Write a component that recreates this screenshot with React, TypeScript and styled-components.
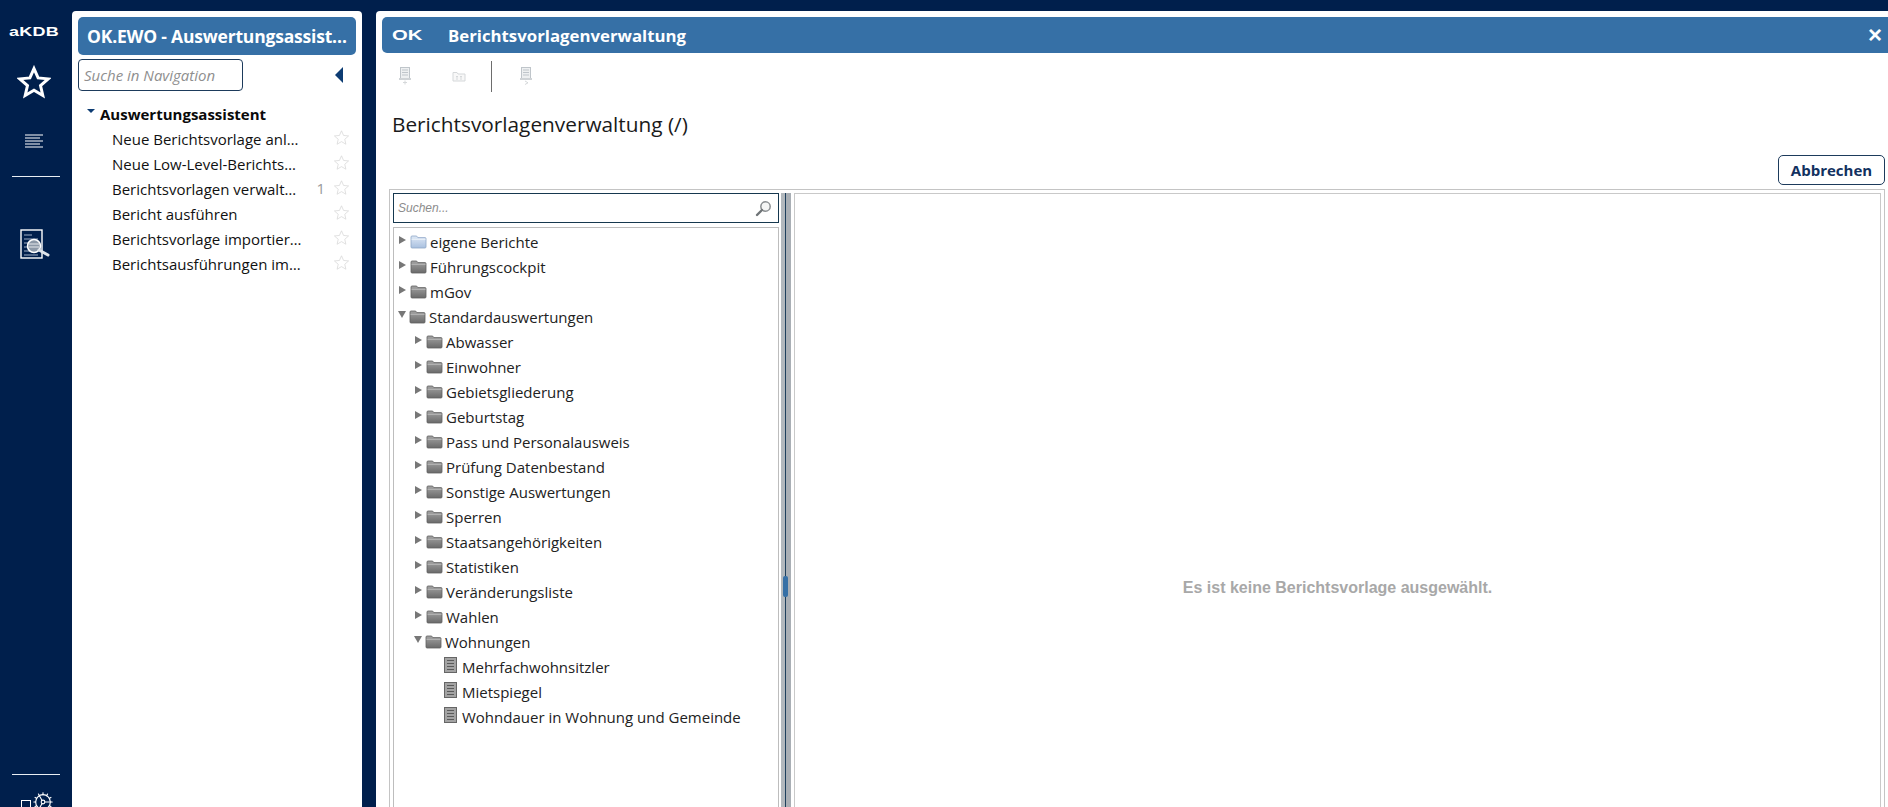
import React from "react";
import styled, { createGlobalStyle } from "styled-components";
import { Cog } from "lucide-react";

const NAVY = "#001f4c";
const BLUE = "#3670a6";
const UI_FONT = `"Open Sans", "Noto Sans", sans-serif`;

const navItems = [
  { label: "Neue Berichtsvorlage anl…" },
  { label: "Neue Low-Level-Berichts…" },
  { label: "Berichtsvorlagen verwalt…", count: 1 },
  { label: "Bericht ausführen" },
  { label: "Berichtsvorlage importier…" },
  { label: "Berichtsausführungen im…" },
];

type TreeEntry = {
  label: string;
  level: number;
  kind: "folder" | "own" | "file";
  open?: boolean;
};

const treeItems: TreeEntry[] = [
  { label: "eigene Berichte", level: 0, kind: "own" },
  { label: "Führungscockpit", level: 0, kind: "folder" },
  { label: "mGov", level: 0, kind: "folder" },
  { label: "Standardauswertungen", level: 0, kind: "folder", open: true },
  { label: "Abwasser", level: 1, kind: "folder" },
  { label: "Einwohner", level: 1, kind: "folder" },
  { label: "Gebietsgliederung", level: 1, kind: "folder" },
  { label: "Geburtstag", level: 1, kind: "folder" },
  { label: "Pass und Personalausweis", level: 1, kind: "folder" },
  { label: "Prüfung Datenbestand", level: 1, kind: "folder" },
  { label: "Sonstige Auswertungen", level: 1, kind: "folder" },
  { label: "Sperren", level: 1, kind: "folder" },
  { label: "Staatsangehörigkeiten", level: 1, kind: "folder" },
  { label: "Statistiken", level: 1, kind: "folder" },
  { label: "Veränderungsliste", level: 1, kind: "folder" },
  { label: "Wahlen", level: 1, kind: "folder" },
  { label: "Wohnungen", level: 1, kind: "folder", open: true },
  { label: "Mehrfachwohnsitzler", level: 2, kind: "file" },
  { label: "Mietspiegel", level: 2, kind: "file" },
  { label: "Wohndauer in Wohnung und Gemeinde", level: 2, kind: "file" },
];

const StarOutline = ({ size, color, width }: { size: number; color: string; width: number }) => (
  <svg width={size} height={size} viewBox="0 0 24 24" fill="none" stroke={color} strokeWidth={width} strokeLinejoin="miter">
    <path d="M12 2.5l2.9 6.6 7.1.7-5.4 4.7 1.6 7-6.2-3.7-6.2 3.7 1.6-7L2 9.8l7.1-.7z" />
  </svg>
);

const ListIcon = () => (
  <svg width="18" height="15" viewBox="0 0 18 15" stroke="#fff" strokeWidth="1.1">
    <path d="M0 1h18M0 4h15M0 7h18M0 10h15M0 13h18" />
  </svg>
);

const ReportIcon = () => (
  <svg width="32" height="32" viewBox="0 0 32 32" fill="none">
    <rect x="1" y="1" width="21" height="28" fill="#001f4c" stroke="#fff" strokeWidth="1.4" />
    <path d="M4 6h8M4 10h14M4 14h5M4 18h4M4 22h6M4 26h14" stroke="#9fb0c6" strokeWidth="1.2" />
    <circle cx="14" cy="17" r="6.5" fill="#8d99a8" stroke="#fff" strokeWidth="1.5" />
    <path d="M9 15h10M9 18h10" stroke="#e5e8ec" strokeWidth="1" />
    <path d="M19 21l9 5" stroke="#dfe4ea" strokeWidth="3" strokeLinecap="round" />
  </svg>
);

const ToolDoc = ({ tail }: { tail: "plus" | "arrow" }) => (
  <svg width="14" height="18" viewBox="0 0 14 18" fill="none" stroke="#bfc5ca" strokeWidth="1">
    <rect x="2.5" y="0.5" width="9" height="11" fill="#eef0f1" />
    <path d="M4 3h6M4 5.5h6M4 8h6" />
    <rect x="1" y="11" width="12" height="2" fill="#cfd3d6" stroke="none" />
    {tail === "plus" ? <path d="M7 13.5v4M5 15.5h4" stroke="#d5d8da" /> : <path d="M6 14l3 1.8L6 17.5" stroke="#d5d8da" />}
  </svg>
);

const ToolFolder = () => (
  <svg width="14" height="12" viewBox="0 0 14 12" fill="none" stroke="#d5d8da" strokeWidth="1">
    <path d="M1 2.5h4l1 1.5h7v7H1z" fill="#f8f8f8" />
    <path d="M4 6.5h2M5 6.5V10M8 6.5h2M9 6.5V10" />
  </svg>
);

const SearchGlass = () => (
  <svg width="17" height="17" viewBox="0 0 17 17" fill="none">
    <circle cx="10.5" cy="6.5" r="4.7" stroke="#8b8f92" strokeWidth="1.5" fill="#f4f5f5" />
    <path d="M7 10l-5 5" stroke="#6f7477" strokeWidth="2.4" strokeLinecap="round" />
  </svg>
);

const FolderIcon = ({ own }: { own: boolean }) => {
  const id = own ? "folderOwn" : "folderGrey";
  return (
    <svg width="17" height="14" viewBox="0 0 17 14">
      <defs>
        <linearGradient id={id} x1="0" y1="0" x2="0" y2="1">
          <stop offset="0" stopColor={own ? "#dfe9f6" : "#a3a3a3"} />
          <stop offset="1" stopColor={own ? "#a9c0df" : "#6a6a6a"} />
        </linearGradient>
      </defs>
      <path
        d="M1 3V2q0-1 1-1h4q1 0 1.5 1l.3.6H15q1 0 1 1V12q0 1-1 1H2q-1 0-1-1z"
        fill={`url(#${id})`}
        stroke={own ? "#8ea6c6" : "#5f5f5f"}
        strokeWidth="0.8"
      />
      <path d="M1.5 4.3h14" stroke={own ? "#f3f7fc" : "#c4c4c4"} strokeWidth="0.8" />
    </svg>
  );
};

const FileIcon = () => (
  <svg width="13" height="16" viewBox="0 0 13 16">
    <rect x="0.5" y="0.5" width="12" height="15" fill="#a3a3a3" stroke="#666" />
    <path d="M3 3.5h7M3 6.5h7M3 9.5h7M3 12.5h7" stroke="#5a5a5a" strokeWidth="1" />
  </svg>
);

const App = () => {
  return (
    <Page>
      <GlobalStyle />
      <SideRail>
        <BrandLogo>aKDB</BrandLogo>
        <RailStar>
          <StarOutline size={34} color="#fff" width={2.1} />
        </RailStar>
        <RailList>
          <ListIcon />
        </RailList>
        <RailDivider />
        <RailReport>
          <ReportIcon />
        </RailReport>
        <RailFoot>
          <RailRule />
          <GearRow>
            <SmallBox />
            <Cog size={22} color="#fff" strokeWidth={1.2} />
          </GearRow>
        </RailFoot>
      </SideRail>

      <NavPanel>
        <NavTitle>OK.EWO - Auswertungsassist…</NavTitle>
        <NavSearchRow>
          <NavSearch>Suche in Navigation</NavSearch>
          <CollapseArrow />
        </NavSearchRow>
        <NavGroup>
          <GroupCaret />
          Auswertungsassistent
        </NavGroup>
        {navItems.map((item) => (
          <NavRow key={item.label}>
            <NavLabel>{item.label}</NavLabel>
            {item.count && <NavCount>{item.count}</NavCount>}
            <NavStar>
              <StarOutline size={17} color="#d5d5d5" width={1} />
            </NavStar>
          </NavRow>
        ))}
      </NavPanel>

      <MainPanel>
        <MainHeader>
          <HeaderLogo>OK</HeaderLogo>
          <HeaderTitle>Berichtsvorlagenverwaltung</HeaderTitle>
          <CloseMark>×</CloseMark>
        </MainHeader>
        <Toolbar>
          <ToolSlot>
            <ToolDoc tail="plus" />
          </ToolSlot>
          <ToolSlot>
            <ToolFolder />
          </ToolSlot>
          <ToolDivider />
          <ToolSlot>
            <ToolDoc tail="arrow" />
          </ToolSlot>
        </Toolbar>
        <PageTitle>Berichtsvorlagenverwaltung (/)</PageTitle>
        <ActionRow>
          <CancelButton>Abbrechen</CancelButton>
        </ActionRow>
        <SplitFrame>
          <TreePane>
            <TreeSearch>
              <TreeSearchHint>Suchen...</TreeSearchHint>
              <SearchGlass />
            </TreeSearch>
            <TreeBox>
              {treeItems.map((entry) => (
                <TreeRow key={entry.label} $level={entry.level}>
                  {entry.kind === "file" ? (
                    <>
                      <FileSlot>
                        <FileIcon />
                      </FileSlot>
                      <FileLabel>{entry.label}</FileLabel>
                    </>
                  ) : (
                    <>
                      <Twisty $open={!!entry.open} />
                      <FolderIcon own={entry.kind === "own"} />
                      <FolderLabel>{entry.label}</FolderLabel>
                    </>
                  )}
                </TreeRow>
              ))}
            </TreeBox>
          </TreePane>
          <Splitter>
            <SplitterGrip />
          </Splitter>
          <DetailPane>
            <EmptyHint>Es ist keine Berichtsvorlage ausgewählt.</EmptyHint>
          </DetailPane>
        </SplitFrame>
      </MainPanel>
    </Page>
  );
};

export default App;

const GlobalStyle = createGlobalStyle`
  html, body {
    margin: 0;
    padding: 0;
    background: ${NAVY};
  }
  * {
    box-sizing: border-box;
  }
`;

const Page = styled.div`
  display: flex;
  width: 1888px;
  height: 807px;
  overflow: hidden;
  background: ${NAVY};
  font-family: ${UI_FONT};
  color: #111;
`;

const SideRail = styled.aside`
  display: flex;
  flex-direction: column;
  align-items: center;
  flex: 0 0 72px;
  height: 807px;
  padding-top: 24px;
`;
const BrandLogo = styled.div`
  width: 48px;
  height: 16px;
  color: #fff;
  font: bold 12px/16px "Liberation Sans", sans-serif;
  letter-spacing: 0.2px;
  text-align: center;
  transform: translateX(-2px) scaleX(1.5);
`;
const RailStar = styled.div`
  display: flex;
  margin: 25px 4px 0 0;
`;
const RailList = styled.div`
  display: flex;
  margin: 35px 4px 0 0;
`;
const RailRule = styled.div`
  flex: none;
  width: 48px;
  height: 1px;
  background: #e8edf3;
`;
const RailDivider = styled(RailRule)`
  margin-top: 27px;
`;
const RailReport = styled.div`
  display: flex;
  margin-top: 52px;
`;
const RailFoot = styled.div`
  display: flex;
  flex-direction: column;
  align-items: center;
  margin-top: auto;
  height: 33px;
  overflow: hidden;
`;
const GearRow = styled.div`
  display: flex;
  align-items: flex-end;
  gap: 1px;
  margin-top: 16px;
  margin-left: 2px;
`;
const SmallBox = styled.div`
  width: 10px;
  height: 10px;
  margin-bottom: 3px;
  border: 1px solid #fff;
`;

const NavPanel = styled.nav`
  flex: 0 0 290px;
  min-width: 0;
  height: 796px;
  margin-top: 11px;
  padding: 6px 6px 0;
  background: #fff;
  border-radius: 4px 4px 0 0;
`;
const NavTitle = styled.div`
  height: 38px;
  padding-left: 9px;
  background: ${BLUE};
  border-radius: 5px;
  color: #fff;
  font-size: 17.5px;
  font-weight: 700;
  letter-spacing: -0.2px;
  line-height: 38px;
  white-space: nowrap;
  overflow: hidden;
`;
const NavSearchRow = styled.div`
  display: flex;
  align-items: center;
  justify-content: space-between;
  margin-top: 4px;
  padding-right: 13px;
`;
const NavSearch = styled.div`
  width: 165px;
  height: 32px;
  padding-left: 5px;
  border: 1px solid #1d3b5c;
  border-radius: 4px;
  color: #8f8f8f;
  font-size: 15px;
  font-style: italic;
  line-height: 30px;
  white-space: nowrap;
`;
const CollapseArrow = styled.div`
  width: 0;
  height: 0;
  border-top: 8px solid transparent;
  border-bottom: 8px solid transparent;
  border-right: 8px solid #0d3c73;
`;
const NavGroup = styled.div`
  display: flex;
  align-items: center;
  height: 24px;
  margin-top: 11px;
  padding-left: 9px;
  font-size: 15px;
  font-weight: 700;
  color: #0a0a0a;
`;
const GroupCaret = styled.span`
  width: 0;
  height: 0;
  margin: -6px 5px 0 0;
  border-left: 4px solid transparent;
  border-right: 4px solid transparent;
  border-top: 4px solid #0d3c73;
`;
const NavRow = styled.div`
  display: flex;
  align-items: center;
  height: 25px;
  padding-left: 34px;
  padding-right: 6px;
  font-size: 15px;
`;
const NavLabel = styled.span`
  flex: 1;
  white-space: nowrap;
  overflow: hidden;
`;
const NavCount = styled.span`
  margin-right: 8px;
  margin-top: -2px;
  color: #999;
  font-size: 15px;
`;
const NavStar = styled.span`
  display: flex;
  margin-top: -3px;
`;

const MainPanel = styled.main`
  display: flex;
  flex-direction: column;
  flex: none;
  width: 1512px;
  height: 796px;
  margin-top: 11px;
  margin-left: 14px;
  padding: 6px 0 0 6px;
  background: #fff;
  border-radius: 4px 0 0 0;
`;
const MainHeader = styled.header`
  display: flex;
  flex: none;
  align-items: center;
  height: 36px;
  padding: 0 6px 0 10px;
  background: ${BLUE};
  border-radius: 5px 0 0 5px;
  color: #fff;
`;
const HeaderLogo = styled.div`
  width: 30px;
  font: bold 15px/16px "Liberation Sans", sans-serif;
  transform: scaleX(1.35);
  transform-origin: left center;
`;
const HeaderTitle = styled.div`
  margin-left: 26px;
  font-size: 16.8px;
  font-weight: 700;
`;
const CloseMark = styled.div`
  margin-left: auto;
  font: bold 24px/20px "Liberation Sans", sans-serif;
`;
const Toolbar = styled.div`
  display: flex;
  flex: none;
  align-items: center;
  height: 32px;
  margin-top: 7px;
  padding-left: 10px;
`;
const ToolSlot = styled.div`
  display: flex;
  justify-content: center;
  width: 26px;
  margin-right: 28px;
  &:nth-child(2) {
    margin-right: 19px;
  }
`;
const ToolDivider = styled.div`
  width: 1px;
  height: 31px;
  margin-right: 21px;
  background: #6d6d6d;
`;
const PageTitle = styled.h1`
  flex: none;
  margin: 17px 0 0;
  padding-left: 10px;
  font-size: 20.8px;
  font-weight: 400;
  line-height: 30px;
  color: #1a1a1a;
`;
const ActionRow = styled.div`
  display: flex;
  flex: none;
  justify-content: flex-end;
  margin-top: 16px;
  padding-right: 3px;
`;
const CancelButton = styled.button`
  width: 107px;
  height: 30px;
  padding: 0;
  background: #fff;
  border: 1px solid #1d3b5c;
  border-radius: 5px;
  color: #12315f;
  font-family: ${UI_FONT};
  font-size: 15px;
  font-weight: 700;
`;
const SplitFrame = styled.section`
  display: flex;
  flex: 1;
  min-height: 0;
  margin: 4px 3px 0 7px;
  padding: 3px 3px 0;
  border: 1px solid #c4c4c4;
  border-bottom: 0;
`;
const TreePane = styled.div`
  display: flex;
  flex-direction: column;
  flex: 0 0 386px;
  gap: 4px;
`;
const TreeSearch = styled.div`
  display: flex;
  flex: none;
  align-items: center;
  justify-content: space-between;
  height: 30px;
  padding: 0 6px 0 4px;
  border: 1px solid #16384f;
`;
const TreeSearchHint = styled.span`
  color: #8c8c8c;
  font: italic 12px "Liberation Sans", sans-serif;
`;
const TreeBox = styled.div`
  flex: 1;
  padding-top: 1px;
  border: 1px solid #bdbdbd;
  border-bottom: 0;
`;
const TreeRow = styled.div<{ $level: number }>`
  display: flex;
  align-items: center;
  height: 25px;
  padding-left: ${(p) => 4 + p.$level * 16}px;
  font-size: 15px;
  color: #222;
  white-space: nowrap;
`;
const Twisty = styled.span<{ $open: boolean }>`
  flex: none;
  width: 0;
  height: 0;
  margin-top: -4px;
  ${(p) =>
    p.$open
      ? `
    margin-right: 3px;
    border-left: 4px solid transparent;
    border-right: 4px solid transparent;
    border-top: 7px solid #777;
  `
      : `
    margin-left: 1px;
    margin-right: 4px;
    border-top: 4px solid transparent;
    border-bottom: 4px solid transparent;
    border-left: 7px solid #777;
  `}
`;
const FolderLabel = styled.span`
  margin-left: 3px;
`;
const FileSlot = styled.span`
  display: flex;
  margin-top: -3px;
  margin-left: 14px;
`;
const FileLabel = styled.span`
  margin-left: 5px;
`;
const Splitter = styled.div`
  position: relative;
  flex: 0 0 10px;
  margin: 0 3px 0 2px;
  background: linear-gradient(90deg, #b2b8bd 0 4px, #1d3f5c 4px 5px, #a9afb5 5px 10px);
`;
const SplitterGrip = styled.div`
  position: absolute;
  top: 383px;
  left: 2px;
  width: 5px;
  height: 21px;
  background: ${BLUE};
  border-radius: 2px;
`;
const DetailPane = styled.div`
  display: flex;
  flex: 1;
  justify-content: center;
  padding-top: 380px;
  border: 1px solid #c9c9c9;
  border-bottom: 0;
`;
const EmptyHint = styled.div`
  color: #a8a8a8;
  font: bold 16px/28px "Liberation Sans", sans-serif;
`;
